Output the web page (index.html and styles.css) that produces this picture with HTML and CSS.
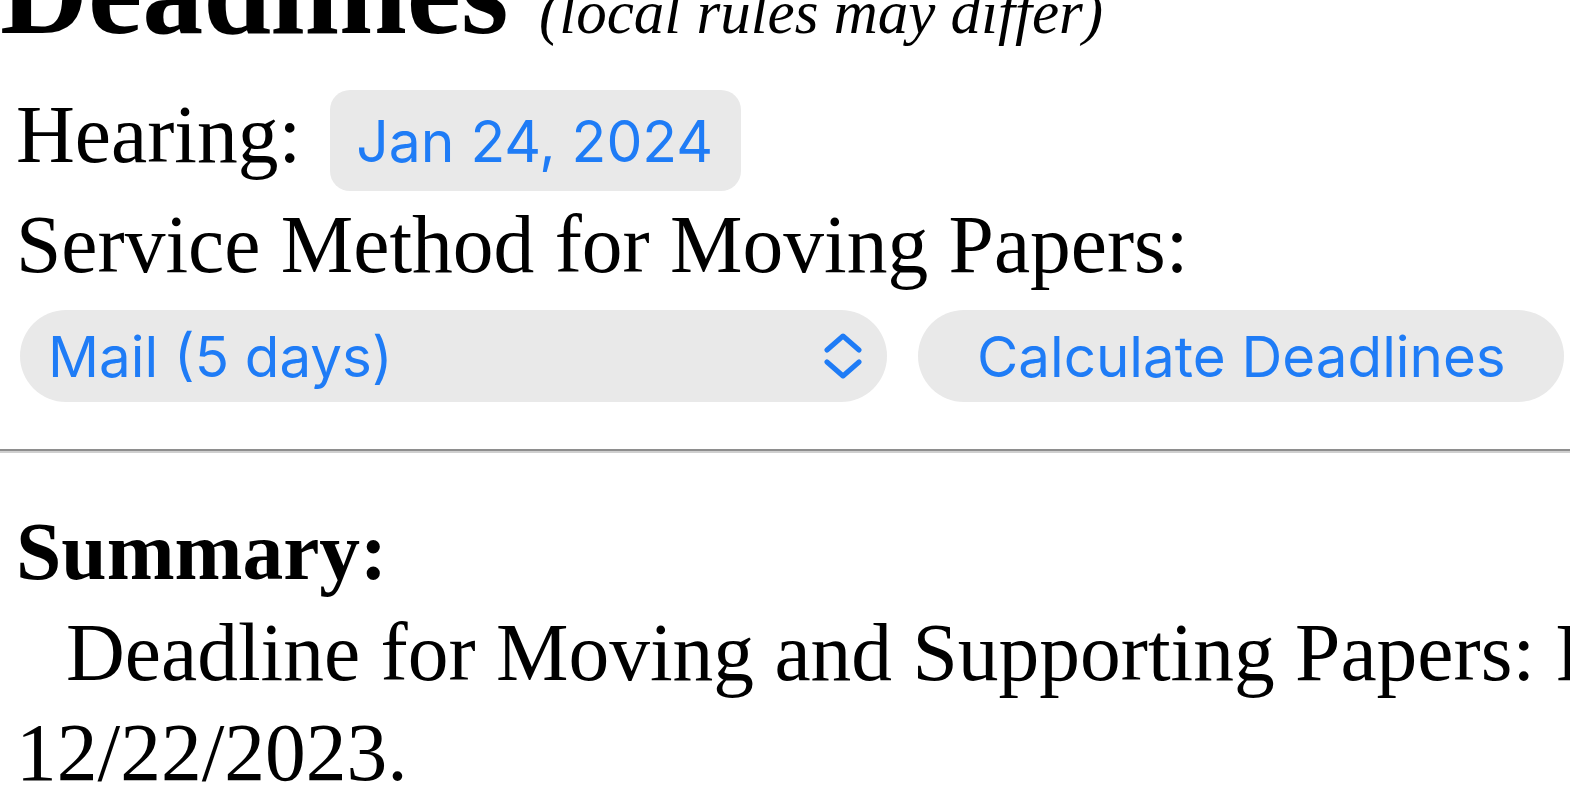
FILE: index.html
```html
<!DOCTYPE html>
<html lang="en">
<head>
<meta charset="utf-8">
<title>Deadlines</title>
<link rel="stylesheet" href="styles.css">
</head>
<body>
<div class="page">
  <h2 class="title">Deadlines <small class="note">(local rules may differ)</small></h2>
  <div class="form">
    <div class="hearing-row">
      <span class="label">Hearing:</span>
      <span class="date-input">Jan 24, 2024</span>
    </div>
    <div class="label service-label">Service Method for Moving Papers:</div>
    <div class="controls">
      <div class="select">
        <span class="select-text">Mail (5 days)</span>
        <svg class="chevrons" width="38" height="46" viewBox="0 0 38 46" aria-hidden="true">
          <path d="M3 17 L19 3 L35 17" fill="none" stroke="#1f7cf6" stroke-width="5" stroke-linecap="round" stroke-linejoin="round"/>
          <path d="M3 29 L19 43 L35 29" fill="none" stroke="#1f7cf6" stroke-width="5" stroke-linecap="round" stroke-linejoin="round"/>
        </svg>
      </div>
      <button class="btn" type="button">Calculate Deadlines</button>
    </div>
  </div>
  <hr class="rule">
  <div class="summary">
    <div class="summary-title">Summary:</div>
    <p class="summary-text">Deadline for Moving and Supporting Papers: Friday,<br>12/22/2023.</p>
  </div>
</div>
</body>
</html>
```

FILE: styles.css
```css
html, body {
  margin: 0;
  padding: 0;
  background: #ffffff;
  overflow: hidden;
}

body {
  width: 1570px;
  height: 812px;
  font-family: "Liberation Serif", "Times New Roman", serif;
  color: #000;
}

.page {
  width: 1900px;
  margin-top: -69px;
}

.title {
  margin: 0;
  font-size: 122px;
  line-height: 122px;
  font-weight: bold;
  white-space: nowrap;
}

.note {
  font-size: 61px;
  font-weight: normal;
  font-style: italic;
}

.form {
  padding-left: 16px;
}

.label {
  font-size: 81.5px;
  line-height: 100px;
  white-space: nowrap;
}

.hearing-row {
  display: flex;
  align-items: baseline;
  gap: 29px;
  margin-top: 11px;
}

.date-input {
  font-family: Inter, "Noto Sans", sans-serif;
  font-size: 57px;
  line-height: 69px;
  color: #1f7cf6;
  background: #e9e9e9;
  border-radius: 20px;
  padding: 17px 28px 15px 26px;
  white-space: nowrap;
}

.service-label {
  margin-top: 4px;
}

.controls {
  display: flex;
  align-items: center;
  gap: 31px;
  margin-top: 15px;
  padding-left: 4px;
}

.select {
  width: 867px;
  height: 92px;
  box-sizing: border-box;
  border-radius: 46px;
  background: #e9e9e9;
  display: flex;
  align-items: center;
  justify-content: space-between;
  padding: 0 25px 0 28px;
}

.select-text, .btn {
  font-family: Inter, "Noto Sans", sans-serif;
  font-size: 56.5px;
  color: #1f7cf6;
  white-space: nowrap;
}

.chevrons {
  display: block;
}

.btn {
  height: 92px;
  border: none;
  border-radius: 46px;
  background: #e9e9e9;
  padding: 0 58px 0 59px;
  margin: 0;
}

.rule {
  margin: 47px 0 0 0;
  height: 0;
  border: none;
  border-top: 2px solid #8e8e8e;
  border-bottom: 2px solid #cfcfcf;
}

.summary {
  padding-left: 16px;
  margin-top: 49px;
}

.summary-title {
  font-size: 81.5px;
  line-height: 100px;
  font-weight: bold;
}

.summary-text {
  margin: 1px 0 0 0;
  font-size: 81.5px;
  line-height: 100px;
  text-indent: 50px;
  white-space: nowrap;
}
```
